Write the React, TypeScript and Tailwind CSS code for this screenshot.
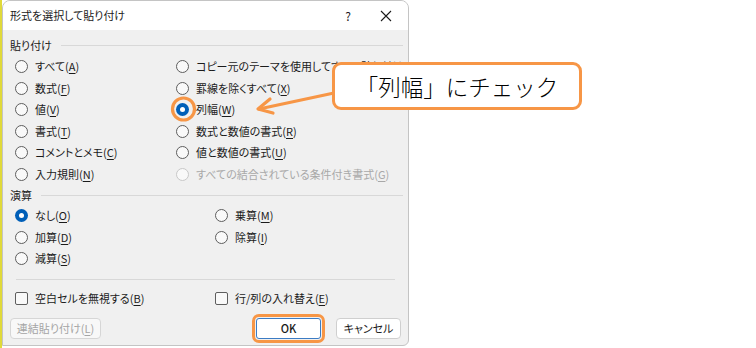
import React from "react";

type Opt = { label: string; key: string; checked?: boolean; disabled?: boolean };

const pasteLeft: Opt[] = [
  { label: "すべて", key: "A" },
  { label: "数式", key: "F" },
  { label: "値", key: "V" },
  { label: "書式", key: "T" },
  { label: "コメントとメモ", key: "C" },
  { label: "入力規則", key: "N" },
];

const pasteRight: Opt[] = [
  { label: "コピー元のテーマを使用してすべて貼り付け", key: "H" },
  { label: "罫線を除くすべて", key: "X" },
  { label: "列幅", key: "W", checked: true },
  { label: "数式と数値の書式", key: "R" },
  { label: "値と数値の書式", key: "U" },
  { label: "すべての結合されている条件付き書式", key: "G", disabled: true },
];

const opsLeft: Opt[] = [
  { label: "なし", key: "O", checked: true },
  { label: "加算", key: "D" },
  { label: "減算", key: "S" },
];

const opsRight: Opt[] = [
  { label: "乗算", key: "M" },
  { label: "除算", key: "I" },
];

const Radio = ({ checked, disabled }: { checked?: boolean; disabled?: boolean }) => {
  if (checked) {
    return (
      <span className="w-[13px] h-[13px] shrink-0 rounded-full bg-[#005fb8] flex items-center justify-center">
        <span className="w-[5px] h-[5px] rounded-full bg-white" />
      </span>
    );
  }
  return (
    <span
      className={`w-[13px] h-[13px] shrink-0 rounded-full border bg-[#f9f9f9] ${
        disabled ? "border-[#c8c8c8]" : "border-[#5e5e5e]"
      }`}
    />
  );
};

const Label = ({ label, k }: { label: string; k: string }) => (
  <span className="whitespace-nowrap">
    {label}(<span className="underline underline-offset-2">{k}</span>)
  </span>
);

const RadioRow = ({ o }: { o: Opt }) => (
  <div className={`h-[21.5px] flex items-center gap-[7px] ${o.disabled ? "text-[#a8a8a8]" : ""}`}>
    <Radio checked={o.checked} disabled={o.disabled} />
    <Label label={o.label} k={o.key} />
  </div>
);

const Checkbox = ({ label, k }: { label: string; k: string }) => (
  <div className="h-[20px] flex items-center gap-[7px]">
    <span className="w-[13px] h-[13px] rounded-[2px] border border-[#5e5e5e] bg-[#f9f9f9]" />
    <Label label={label} k={k} />
  </div>
);

const SectionTitle = ({ title, h }: { title: string; h: string }) => (
  <div className={`${h} flex items-center gap-[9px] pl-[7px] pr-[5px]`}>
    <span>{title}</span>
    <span className="flex-1 h-px bg-[#d8d8d8]" />
  </div>
);

const App = () => {
  return (
    <div
      className="w-[756px] h-[348px] bg-white relative overflow-hidden flex text-[11px] text-[#1b1b1b] leading-none [font-feature-settings:'palt']"
      style={{ fontFamily: '"Noto Sans CJK JP", "Noto Sans", sans-serif' }}
    >
      {/* sheet showing at the left */}
      <div className="w-[2px] h-full bg-[#e0d93a]" />

      {/* dialog */}
      <div className="w-[407px] h-[346px] flex flex-col border border-[#c4c4c4] rounded-t-[8px] rounded-br-[6px] overflow-hidden bg-[#f0f0f0]">
        {/* title bar */}
        <div className="h-[29px] bg-white flex items-center pl-[7px] shrink-0">
          <span className="text-[11px]">形式を選択して貼り付け</span>
          <span className="ml-auto mr-[29px] text-[12px]">?</span>
          <svg width="12" height="12" viewBox="0 0 12 12" className="mr-[16px]">
            <path d="M1 1 L11 11 M11 1 L1 11" stroke="#1b1b1b" strokeWidth="1.1" />
          </svg>
        </div>

        {/* body */}
        <div className="pt-[4px] flex flex-col">
          <SectionTitle title="貼り付け" h="h-[22px]" />
          <div className="flex pl-[12px]">
            <div className="w-[161px] shrink-0 flex flex-col">
              {pasteLeft.map((o) => (
                <RadioRow key={o.key} o={o} />
              ))}
            </div>
            <div className="flex flex-col">
              {pasteRight.map((o) => (
                <RadioRow key={o.key} o={o} />
              ))}
            </div>
          </div>

          <SectionTitle title="演算" h="h-[20px]" />
          <div className="flex pl-[12px]">
            <div className="w-[200px] shrink-0 flex flex-col">
              {opsLeft.map((o) => (
                <RadioRow key={o.key} o={o} />
              ))}
            </div>
            <div className="flex flex-col">
              {opsRight.map((o) => (
                <RadioRow key={o.key} o={o} />
              ))}
            </div>
          </div>

          <div className="mt-[9px] mx-[13px] h-px bg-[#d8d8d8]" />

          <div className="mt-[9px] flex pl-[12px]">
            <div className="w-[200px] shrink-0">
              <Checkbox label="空白セルを無視する" k="B" />
            </div>
            <Checkbox label="行/列の入れ替え" k="E" />
          </div>

          {/* buttons */}
          <div className="mt-[9px] flex items-center pl-[7px] pr-[7px]">
            <button className="w-[91px] h-[21px] rounded-[4px] border border-[#d6d6d6] bg-[#f8f8f8] text-[#a5a5a5]">
              連結貼り付け(<span className="underline underline-offset-2">L</span>)
            </button>
            <button className="ml-auto w-[65px] h-[21px] rounded-[3px] border border-[#3c7cc4] bg-white text-[11px] font-medium outline-[3px] outline-solid outline-[#f79646] outline-offset-[1px]">
              OK
            </button>
            <button className="ml-[15px] w-[65px] h-[21px] rounded-[4px] border border-[#cfcfcf] bg-white">
              キャンセル
            </button>
          </div>
        </div>
      </div>

      {/* annotation: circle and arrow */}
      <svg className="absolute inset-0 pointer-events-none" width="756" height="348">
        <circle cx="183.5" cy="109" r="11" fill="none" stroke="#f79646" strokeWidth="3.2" />
        <path d="M259 109 L334 93" stroke="#f79646" strokeWidth="3.2" strokeLinecap="round" />
        <path d="M270 99 L258 109 L273 113" fill="none" stroke="#f79646" strokeWidth="3.2" strokeLinecap="round" strokeLinejoin="round" />
      </svg>

      {/* annotation: callout box */}
      <div className="absolute left-[332px] top-[62px] w-[250px] h-[48px] rounded-[9px] border-[3.5px] border-[#f79646] bg-white flex items-center justify-center">
        <span className="text-[22.5px] text-black font-light leading-none [font-feature-settings:normal]">「列幅」にチェック</span>
      </div>
    </div>
  );
};

export default App;
